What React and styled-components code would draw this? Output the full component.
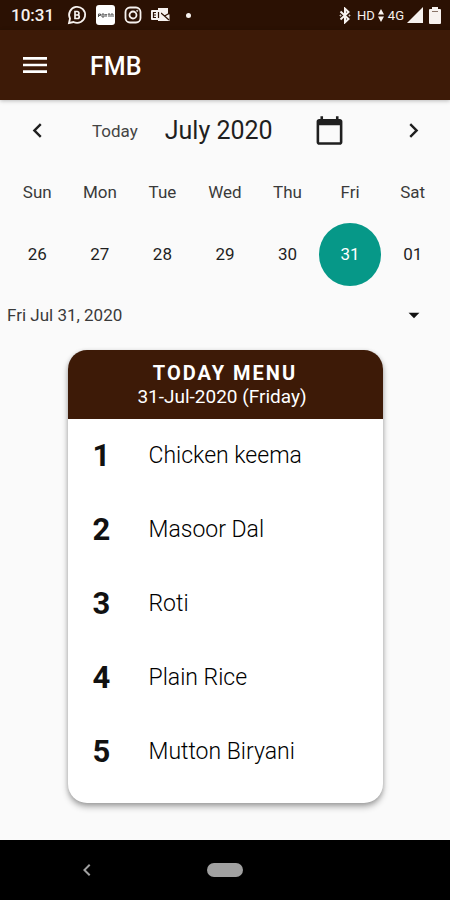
import React, { useState } from "react";
import styled, { createGlobalStyle, css } from "styled-components";
import {
  MdArrowDropDown,
  MdCalendarToday,
  MdChevronLeft,
  MdChevronRight,
  MdMenu,
} from "react-icons/md";

const brown = "#3d1a07";

const GlobalStyle = createGlobalStyle`
  *, *::before, *::after { box-sizing: border-box; }
  body {
    margin: 0;
    background: #fafafa;
    color: #1f1f1f;
    font-family: Roboto, "Liberation Sans", sans-serif;
  }
  button, select { font: inherit; color: inherit; }
`;

const Screen = styled.div`
  display: flex;
  flex-direction: column;
  min-height: 100vh;
`;

const StatusBar = styled.div`
  display: flex;
  align-items: center;
  justify-content: space-between;
  height: 30px;
  padding: 0 9px 0 11px;
  background: #2b1103;
  color: #f7f2ef;
`;

const StatusGroup = styled.div`
  display: flex;
  align-items: center;
  gap: ${(p) => p.$gap}px;

  svg { display: block; }
`;

const Clock = styled.time`
  margin-right: 4px;
  font-size: 17px;
  font-weight: 500;
`;

const Network = styled.span`
  font-size: 13px;
  margin-left: ${(p) => p.$lead || 0}px;
`;

const Dot = styled.span`
  width: 5px;
  height: 5px;
  margin-left: 7px;
  border-radius: 50%;
  background: currentColor;
`;

const AppBar = styled.header`
  display: flex;
  align-items: center;
  gap: 30px;
  height: 70px;
  padding: 0 10px;
  background: ${brown};
  color: #fff;
  box-shadow: 0 1px 4px rgba(0, 0, 0, 0.25);
`;

const AppTitle = styled.h1`
  margin: 0;
  padding-top: 2px;
  font-size: 25px;
  font-weight: 500;
`;

const IconButton = styled.button`
  display: flex;
  align-items: center;
  justify-content: center;
  width: ${(p) => p.$width || 50}px;
  height: 50px;
  padding: 0;
  border: 0;
  background: none;
  cursor: pointer;
`;

const Main = styled.main`
  flex: 1;
  display: flex;
  flex-direction: column;
`;

const MonthBar = styled.div`
  display: flex;
  align-items: center;
  height: 61px;
  padding: 0 6px;
`;

const MonthTools = styled.div`
  flex: 1;
  display: flex;
  align-items: center;
  gap: 27px;
  padding: 0 28px 0 24px;
`;

const TodayButton = styled.button`
  padding: 0;
  border: 0;
  background: none;
  color: #444;
  font-size: 17px;
  cursor: pointer;
`;

const MonthTitle = styled.h2`
  flex: 1;
  margin: 0;
  font-size: 25px;
  font-weight: 400;
  white-space: nowrap;
`;

const WeekWrap = styled.div`
  padding: 0 6px;
`;

const Week = styled.table`
  width: 100%;
  table-layout: fixed;
  border-collapse: collapse;
  font-size: 17px;

  th, td {
    padding: 0;
    text-align: center;
    font-weight: 400;
  }
  th { height: 62px; color: #3a3a3a; }
`;

const Day = styled.button`
  display: block;
  width: 100%;
  aspect-ratio: 1;
  padding: 0;
  border: 0;
  border-radius: 50%;
  background: none;
  cursor: pointer;
  ${(p) =>
    p.$selected &&
    css`
      background: #069888;
      color: #fff;
    `}
`;

const DatePicker = styled.label`
  display: grid;
  grid-template-columns: 1fr 72px;
  align-items: center;
  height: 59px;

  svg {
    grid-area: 1 / 2;
    justify-self: center;
    pointer-events: none;
    color: #111;
  }
`;

const DateSelect = styled.select`
  grid-area: 1 / 1 / 2 / 3;
  height: 40px;
  padding: 0 7px;
  border: 0;
  background: none;
  appearance: none;
  color: #3a3a3a;
  font-size: 17px;
`;

const Card = styled.section`
  width: 70%;
  margin: 5px auto 37px;
  border-radius: 19px;
  overflow: hidden;
  background: #fff;
  box-shadow: 0 4px 6px rgba(0, 0, 0, 0.3), 0 1px 4px rgba(0, 0, 0, 0.15);
`;

const CardHeader = styled.header`
  height: 69px;
  padding-top: 12px;
  background: ${brown};
  color: #fff;
  text-align: center;
`;

const CardTitle = styled.h2`
  margin: 0;
  font-size: 20px;
  line-height: 23px;
  font-weight: 700;
  letter-spacing: 2px;
`;

const CardDate = styled.p`
  margin: 0;
  padding-right: 6px;
  font-size: 19px;
  line-height: 23px;
`;

const MenuList = styled.ol`
  margin: 0;
  padding: 0 0 14px;
  list-style: none;
`;

const MenuItem = styled.li`
  display: grid;
  grid-template-columns: 56px 1fr;
  align-items: center;
  height: 74px;
  padding: 0 25px;
`;

const ItemNumber = styled.span`
  font-size: 31px;
  font-weight: 700;
  color: #111;
`;

const ItemName = styled.span`
  font-size: 23px;
  font-weight: 300;
  color: #000;
`;

const NavBar = styled.nav`
  display: grid;
  grid-template-columns: 1fr auto 1fr;
  align-items: center;
  height: 60px;
  background: #000;
  color: #a0a0a0;
`;

const BackButton = styled(IconButton)`
  margin-left: 62px;
`;

const HomeButton = styled.button`
  width: 36px;
  height: 14px;
  padding: 0;
  border: 0;
  border-radius: 7px;
  background: #a0a0a0;
`;

const ChatIcon = () => (
  <svg width="20" height="20" viewBox="0 0 20 20" fill="none" stroke="currentColor" strokeWidth="1.800">
    <path d="M2 18l1-4.500A8 8 0 1 1 6.500 17z" />
    <path d="M8 6.500v7h2.500a1.750 1.750 0 0 0 0-3.500H8h2.200a1.750 1.750 0 0 0 0-3.500z" strokeWidth="1.700" />
  </svg>
);

const WalletIcon = () => (
  <svg width="19" height="20" viewBox="0 0 19 20">
    <rect width="19" height="20" rx="3" fill="#fff" />
    <path
      d="M2.500 12V9h2v1.500h-2M6 12V9h2v3zM9 9l1 1.500L11 9M10 10.500V12M12 9h2M13 9v3M15 12V9h2v3"
      fill="none"
      stroke="#555"
      strokeWidth="1"
    />
  </svg>
);

const CameraIcon = () => (
  <svg width="18" height="18" viewBox="0 0 18 18" fill="none" stroke="currentColor" strokeWidth="1.800">
    <rect x="1.500" y="1.500" width="15" height="15" rx="4.500" />
    <circle cx="9" cy="9" r="3.500" />
    <circle cx="13.200" cy="4.800" r=".6" strokeWidth="1" />
  </svg>
);

const MailIcon = () => (
  <svg width="19" height="16" viewBox="0 0 19 16">
    <path d="M7 1h10v6l1.500.5V14H7z" fill="currentColor" />
    <path d="M10 6l3.500 3L18 6.500M13.500 9l4.500 4" fill="none" stroke="#2b1103" strokeWidth="1.200" />
    <rect y="3" width="10" height="10" rx="1" fill="currentColor" />
    <path d="M5 5.500H2.500v5H5M2.500 8H5M7.500 5v6" fill="none" stroke="#2b1103" strokeWidth="1.200" />
  </svg>
);

const BluetoothIcon = () => (
  <svg width="12" height="17" viewBox="0 0 12 17" fill="none" stroke="currentColor" strokeWidth="2">
    <path d="M1.500 4.500l8 7.500L6 15.300V1.700L9.500 5l-8 7.500" />
    <circle cx="1.500" cy="8.500" r=".5" strokeWidth="1" />
    <circle cx="10.500" cy="8.500" r=".5" strokeWidth="1" />
  </svg>
);

const DataIcon = () => (
  <svg width="6" height="13" viewBox="0 0 6 13" fill="currentColor">
    <path d="M3 0l3 5.500H0zM3 13l3-5.500H0z" />
  </svg>
);

const SignalIcon = () => (
  <svg width="16" height="16" viewBox="0 0 16 16" fill="currentColor">
    <path d="M16 0v16H0z" />
  </svg>
);

const BatteryIcon = () => (
  <svg width="12" height="17" viewBox="0 0 12 17" fill="currentColor">
    <path d="M3 0h6v2h2a1 1 0 0 1 1 1v13a1 1 0 0 1-1 1H1a1 1 0 0 1-1-1V3a1 1 0 0 1 1-1h2z" />
    <path d="M3 4.500h6" stroke="#8a7468" strokeWidth="1" />
  </svg>
);

const days = [
  ["Sun", "26"],
  ["Mon", "27"],
  ["Tue", "28"],
  ["Wed", "29"],
  ["Thu", "30"],
  ["Fri", "31"],
  ["Sat", "01"],
];

const longDates = days.map(([name, date]) =>
  date === "01" ? "Sat Aug 01, 2020" : `${name} Jul ${date}, 2020`
);

const dishes = ["Chicken keema", "Masoor Dal", "Roti", "Plain Rice", "Mutton Biryani"];

export default function App() {
  const [selected, setSelected] = useState(5);

  return (
    <Screen>
      <GlobalStyle />
      <StatusBar>
        <StatusGroup $gap={9}>
          <Clock>10:31</Clock>
          <ChatIcon />
          <WalletIcon />
          <CameraIcon />
          <MailIcon />
          <Dot />
        </StatusGroup>
        <StatusGroup $gap={3}>
          <BluetoothIcon />
          <Network $lead={3}>HD</Network>
          <DataIcon />
          <Network $lead={1}>4G</Network>
          <SignalIcon />
          <span />
          <BatteryIcon />
        </StatusGroup>
      </StatusBar>
      <AppBar>
        <IconButton aria-label="Open menu"><MdMenu size={32} /></IconButton>
        <AppTitle>FMB</AppTitle>
      </AppBar>
      <Main>
        <MonthBar>
          <IconButton $width={62} aria-label="Previous week"><MdChevronLeft size={29} /></IconButton>
          <MonthTools>
            <TodayButton onClick={() => setSelected(5)}>Today</TodayButton>
            <MonthTitle>July 2020</MonthTitle>
            <IconButton aria-label="Choose date"><MdCalendarToday size={31} /></IconButton>
          </MonthTools>
          <IconButton $width={62} aria-label="Next week"><MdChevronRight size={29} /></IconButton>
        </MonthBar>
        <WeekWrap>
          <Week>
            <thead>
              <tr>{days.map(([name]) => <th key={name} scope="col">{name}</th>)}</tr>
            </thead>
            <tbody>
              <tr>
                {days.map(([name, date], i) => (
                  <td key={name}>
                    <Day $selected={i === selected} aria-pressed={i === selected} onClick={() => setSelected(i)}>
                      {date}
                    </Day>
                  </td>
                ))}
              </tr>
            </tbody>
          </Week>
        </WeekWrap>
        <DatePicker>
          <DateSelect
            aria-label="Selected date"
            value={selected}
            onChange={(e) => setSelected(Number(e.target.value))}
          >
            {longDates.map((text, i) => <option key={text} value={i}>{text}</option>)}
          </DateSelect>
          <MdArrowDropDown size={26} />
        </DatePicker>
        <Card>
          <CardHeader>
            <CardTitle>TODAY MENU</CardTitle>
            <CardDate>31-Jul-2020 (Friday)</CardDate>
          </CardHeader>
          <MenuList>
            {dishes.map((dish, i) => (
              <MenuItem key={dish}>
                <ItemNumber>{i + 1}</ItemNumber>
                <ItemName>{dish}</ItemName>
              </MenuItem>
            ))}
          </MenuList>
        </Card>
      </Main>
      <NavBar aria-label="System">
        <BackButton aria-label="Back"><MdChevronLeft size={24} /></BackButton>
        <HomeButton aria-label="Home" />
      </NavBar>
    </Screen>
  );
}
